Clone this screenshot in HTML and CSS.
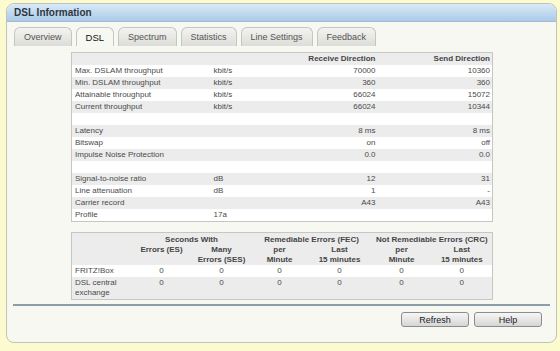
FILE: index.html
```html
<!DOCTYPE html>
<html>
<head>
<meta charset="utf-8">
<link rel="stylesheet" href="styles.css">
</head>
<body>
<div class="panel">
  <div class="panel-head">DSL Information</div>
  <div class="tabs">
    <div class="tab">Overview</div>
    <div class="tab active">DSL</div>
    <div class="tab">Spectrum</div>
    <div class="tab">Statistics</div>
    <div class="tab">Line Settings</div>
    <div class="tab">Feedback</div>
  </div>
  <div class="content">
    <table class="grid info">
      <colgroup><col class="c-label"><col class="c-unit"><col class="c-rx"><col class="c-tx"></colgroup>
      <tr class="alt head"><td></td><td></td><td class="num">Receive Direction</td><td class="num">Send Direction</td></tr>
      <tr><td>Max. DSLAM throughput</td><td>kbit/s</td><td class="num">70000</td><td class="num">10360</td></tr>
      <tr class="alt"><td>Min. DSLAM throughput</td><td>kbit/s</td><td class="num">360</td><td class="num">360</td></tr>
      <tr><td>Attainable throughput</td><td>kbit/s</td><td class="num">66024</td><td class="num">15072</td></tr>
      <tr class="alt"><td>Current throughput</td><td>kbit/s</td><td class="num">66024</td><td class="num">10344</td></tr>
      <tr><td>&nbsp;</td><td></td><td></td><td></td></tr>
      <tr class="alt"><td>Latency</td><td></td><td class="num">8 ms</td><td class="num">8 ms</td></tr>
      <tr><td>Bitswap</td><td></td><td class="num">on</td><td class="num">off</td></tr>
      <tr class="alt"><td>Impulse Noise Protection</td><td></td><td class="num">0.0</td><td class="num">0.0</td></tr>
      <tr><td>&nbsp;</td><td></td><td></td><td></td></tr>
      <tr class="alt"><td>Signal-to-noise ratio</td><td>dB</td><td class="num">12</td><td class="num">31</td></tr>
      <tr><td>Line attenuation</td><td>dB</td><td class="num">1</td><td class="num">-</td></tr>
      <tr class="alt"><td>Carrier record</td><td></td><td class="num">A43</td><td class="num">A43</td></tr>
      <tr><td>Profile</td><td>17a</td><td></td><td></td></tr>
    </table>

    <table class="grid errors">
      <colgroup><col class="e-label"><col class="e-es"><col class="e-ses"><col class="e-fpm"><col class="e-f15"><col class="e-cpm"><col class="e-c15"></colgroup>
      <tr class="alt head first"><td></td><td colspan="2">Seconds With</td><td colspan="2">Remediable Errors (FEC)</td><td colspan="2">Not Remediable Errors (CRC)</td></tr>
      <tr class="alt head second"><td></td><td>Errors (ES)<br>&nbsp;</td><td>Many<br>Errors (SES)</td><td>per<br>Minute</td><td>Last<br>15 minutes</td><td>per<br>Minute</td><td>Last<br>15 minutes</td></tr>
      <tr><td class="lbl">FRITZ!Box</td><td>0</td><td>0</td><td>0</td><td>0</td><td>0</td><td>0</td></tr>
      <tr class="alt"><td class="lbl">DSL central exchange</td><td>0</td><td>0</td><td>0</td><td>0</td><td>0</td><td>0</td></tr>
    </table>
  </div>
  <div class="rule"></div>
  <div class="actions">
    <button class="btn">Refresh</button>
    <button class="btn">Help</button>
  </div>
</div>
</body>
</html>
```

FILE: styles.css
```css
html, body {
  margin: 0;
  padding: 0;
}
body {
  background: #fcfbcf;
  padding: 3px 0 0 6px;
  font-family: "Liberation Sans", Arial, sans-serif;
}
.panel {
  box-sizing: border-box;
  width: 551px;
  height: 340px;
  border: 1px solid #c2c2b6;
  border-radius: 8px;
  background: #f8f8f3;
  overflow: hidden;
}
.panel-head {
  height: 17px;
  line-height: 17px;
  padding-left: 7px;
  font-size: 10px;
  font-weight: bold;
  color: #2c3642;
  background: linear-gradient(#d9e9f7, #abcbe8);
  border-bottom: 1px solid #a3bccf;
}
.tabs {
  display: flex;
  align-items: flex-end;
  gap: 4px;
  height: 19px;
  margin-top: 5px;
  padding-left: 7px;
}
.tab {
  box-sizing: border-box;
  height: 19px;
  line-height: 19px;
  padding: 0 9px;
  font-size: 9px;
  color: #555;
  border: 1px solid #c6c6c0;
  border-bottom: none;
  border-radius: 6px 6px 0 0;
  background: linear-gradient(#f3f3f1, #dcdcd8);
}
.tab.active {
  background: #f8f8f3;
  color: #111;
  font-size: 9.5px;
}
.content {
  padding: 6px 0 0 64px;
}
.grid {
  border-collapse: collapse;
  border: 1px solid #c6c6c6;
  font-size: 8px;
  color: #4a4a4a;
  table-layout: fixed;
}
.grid td {
  box-sizing: border-box;
  height: 12px;
  padding: 1px 2px;
  line-height: 10px;
  white-space: nowrap;
  vertical-align: top;
}
.grid tr {
  background: #fff;
}
.grid tr.alt {
  background: #ececec;
}
.grid .head td {
  font-weight: bold;
  color: #444;
}
.info {
  width: 421px;
}
.info td:first-child {
  padding-left: 3px;
}
.c-label { width: 140px; }
.c-unit { width: 89px; }
.c-rx { width: 77px; }
.c-tx { width: 115px; }
.num {
  text-align: right;
}
.errors {
  width: 421px;
  margin-top: 10px;
}
.errors td {
  text-align: center;
}
.errors td.lbl {
  text-align: left;
  white-space: normal;
  padding-left: 3px;
}
.errors .first td {
  padding-top: 2px;
  padding-bottom: 0;
}
.errors .second td {
  padding-top: 0;
  padding-bottom: 0;
}
.e-label { width: 60px; }
.e-es { width: 60px; }
.e-ses { width: 60px; }
.e-fpm { width: 56px; }
.e-f15 { width: 64px; }
.e-cpm { width: 60px; }
.e-c15 { width: 61px; }
.rule {
  height: 2px;
  margin: 4px 6px 0 6px;
  background: #8d9ea9;
}
.actions {
  display: flex;
  justify-content: flex-end;
  gap: 5px;
  margin-top: 6px;
  padding-right: 14px;
}
.btn {
  box-sizing: border-box;
  width: 68px;
  height: 15px;
  padding: 0;
  font-family: "Liberation Sans", Arial, sans-serif;
  font-size: 9px;
  color: #222;
  border: 1px solid #8c8c8c;
  border-radius: 3px;
  background: linear-gradient(#f6f6f6, #d6d6d6);
}
```
